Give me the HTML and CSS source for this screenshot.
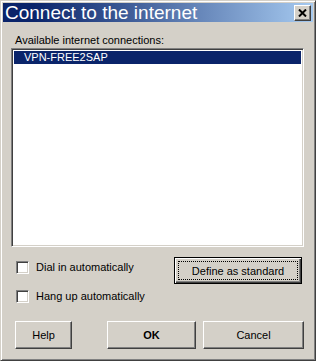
FILE: index.html
```html
<!DOCTYPE html>
<html lang="en">
<head>
  <meta charset="UTF-8">
  <title>Connect to the internet</title>
  <link rel="stylesheet" href="styles.css">
</head>
<body>
  <div class="window">
    <div class="titlebar">
      <span class="title">Connect to the internet</span>
      <button class="close-btn" aria-label="Close">
        <svg width="9" height="8" viewBox="0 0 9 8">
          <path d="M1 0.5L8 7.5M8 0.5L1 7.5" stroke="#000" stroke-width="2"/>
        </svg>
      </button>
    </div>

    <div class="content">
      <div class="label">Available internet connections:</div>
      <div class="listbox">
        <div class="list-item selected">VPN-FREE2SAP</div>
      </div>

      <div class="options">
        <div class="option-row first">
          <label class="check">
            <span class="checkbox"></span>
            <span>Dial in automatically</span>
          </label>
          <button class="btn default"><span class="focus">Define as standard</span></button>
        </div>
        <div class="option-row">
          <label class="check">
            <span class="checkbox"></span>
            <span>Hang up automatically</span>
          </label>
        </div>
      </div>

      <div class="actions">
        <button class="btn help">Help</button>
        <button class="btn ok">OK</button>
        <button class="btn cancel">Cancel</button>
      </div>
    </div>
  </div>
</body>
</html>
```

FILE: styles.css
```css
* {
  box-sizing: border-box;
}

body {
  margin: 0;
  font-family: "Liberation Sans", Arial, sans-serif;
  font-size: 11px;
  color: #000;
  background: #d4d0c8;
}

.window {
  width: 316px;
  height: 361px;
  background: #d4d0c8;
  border: 1px solid;
  border-color: #d4d0c8 #404040 #404040 #d4d0c8;
  box-shadow: inset 1px 1px #fff, inset -1px -1px #808080;
  padding: 2px;
  display: flex;
  flex-direction: column;
}

.titlebar {
  height: 19px;
  background: linear-gradient(to right, #0a246a 0%, #0a246a 10%, #a6caf0 100%);
  display: flex;
  align-items: center;
  justify-content: space-between;
  padding: 0 2px 0 2px;
}

.title {
  color: #fff;
  font-size: 19px;
  line-height: 19px;
  white-space: nowrap;
}

.close-btn {
  width: 17px;
  height: 16px;
  padding: 0;
  border: 1px solid;
  border-color: #fff #404040 #404040 #fff;
  box-shadow: inset -1px -1px #808080;
  background: #d4d0c8;
  display: flex;
  align-items: center;
  justify-content: center;
}

.content {
  flex: 1;
  padding: 12px 9px 0 8px;
  display: flex;
  flex-direction: column;
}

.label {
  line-height: 13px;
  padding-left: 4px;
}

.listbox {
  margin-top: 1px;
  height: 199px;
  background: #fff;
  border: 1px solid;
  border-color: #808080 #fff #fff #808080;
  box-shadow: inset 1px 1px #404040, inset -1px -1px #d4d0c8;
  padding: 2px 2px;
}

.list-item {
  height: 13px;
  line-height: 13px;
  padding-left: 10px;
}

.list-item.selected {
  background: #0a246a;
  color: #fff;
}

.options {
  margin-top: 10px;
}

.option-row {
  display: flex;
  justify-content: space-between;
  align-items: flex-start;
}

.option-row + .option-row {
  margin-top: 6px;
}

.option-row.first .check {
  margin-top: 4px;
}

.check {
  display: flex;
  align-items: center;
  gap: 7px;
  margin-left: 5px;
  line-height: 13px;
}

.checkbox {
  width: 13px;
  height: 13px;
  background: #fff;
  border: 1px solid;
  border-color: #808080 #fff #fff #808080;
  box-shadow: inset 1px 1px #404040, inset -1px -1px #d4d0c8;
}

.btn {
  font-family: inherit;
  font-size: 11px;
  color: #000;
  background: #d4d0c8;
  border: 1px solid;
  border-color: #fff #404040 #404040 #fff;
  box-shadow: inset -1px -1px #808080;
  padding: 0;
  height: 28px;
}

.btn.default {
  width: 128px;
  height: 27px;
  margin-right: 2px;
  border: 1px solid #000;
  box-shadow: inset 1px 1px #fff, inset -1px -1px #404040, inset -2px -2px #808080;
  padding: 3px;
  display: flex;
}

.focus {
  flex: 1;
  border: 1px dotted #000;
  display: flex;
  align-items: center;
  justify-content: center;
}

.actions {
  margin-top: 18px;
  display: flex;
  padding-left: 4px;
}

.help {
  width: 57px;
}

.ok {
  width: 89px;
  margin-left: 35px;
  font-weight: bold;
}

.cancel {
  width: 101px;
  margin-left: 7px;
}
```
